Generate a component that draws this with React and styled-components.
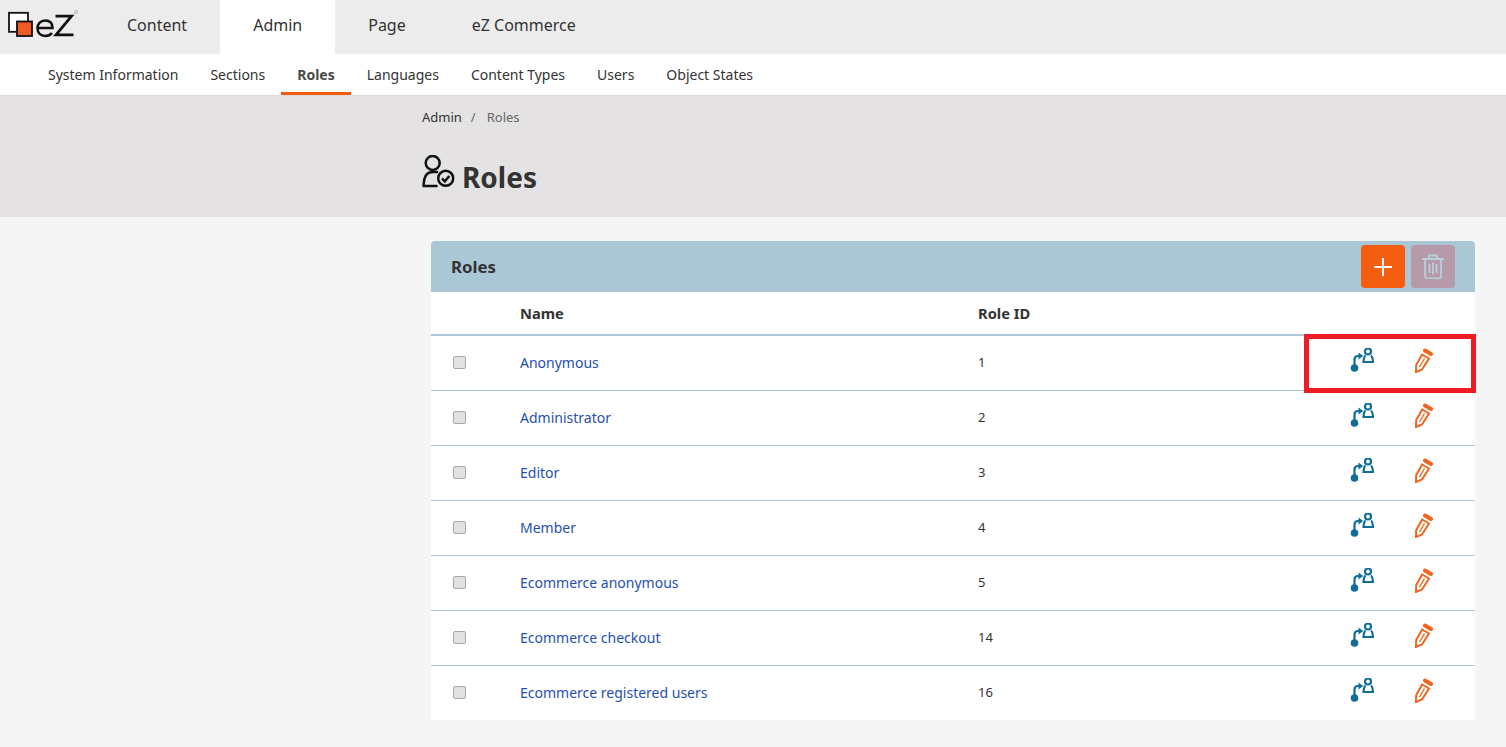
import React from 'react';
import styled, { createGlobalStyle } from 'styled-components';

const GlobalStyle = createGlobalStyle`
  html, body {
    margin: 0;
    padding: 0;
    background: #f5f5f5;
    font-family: "Noto Sans", "Open Sans", sans-serif;
    color: #333;
  }
`;

const TopBar = styled.div`
  display: flex;
  height: 54px;
  background: #ececec;
`;

const Logo = styled.div`
  width: 94px;
  padding: 8px 0 0 8px;
  box-sizing: border-box;
`;

const Tab = styled.a`
  display: flex;
  align-items: center;
  padding: 0 33px 4px;
  font-size: 16px;
  color: #333;
  background: ${({ $active }) => ($active ? '#fff' : 'transparent')};
`;

const SubBar = styled.div`
  display: flex;
  height: 41px;
  padding-left: 32px;
  background: #fff;
  border-bottom: 1px solid #dcdcdc;
`;

const SubItem = styled.a`
  display: flex;
  align-items: center;
  padding: 3px 16px 0;
  font-size: 14px;
  font-weight: ${({ $active }) => ($active ? 700 : 400)};
  color: ${({ $active }) => ($active ? '#4a4a4a' : '#333')};
  border-bottom: 3px solid ${({ $active }) => ($active ? '#f15a10' : 'transparent')};
  box-sizing: border-box;
  height: 41px;
`;

const TitleBand = styled.div`
  height: 121px;
  box-sizing: border-box;
  padding: 12px 0 0 422px;
  background: #e4e2e3;
`;

const Crumbs = styled.div`
  display: flex;
  align-items: center;
  height: 18px;
  font-size: 13px;
  color: #333;
`;

const CrumbSep = styled.span`
  padding: 0 11px 0 9px;
  color: #666;
`;

const CrumbCurrent = styled.span`
  color: #666;
`;

const Title = styled.h1`
  display: flex;
  align-items: center;
  gap: 7px;
  height: 40px;
  margin: 31px 0 0;
  font-size: 28px;
  line-height: 40px;
  font-weight: 700;
  color: #333;
  svg {
    margin-bottom: 12px;
  }
`;

const Main = styled.div`
  padding: 24px 31px 27px 431px;
`;

const Card = styled.div`
  position: relative;
  background: #fff;
`;

const CardHead = styled.div`
  display: flex;
  align-items: center;
  height: 51px;
  padding: 0 20px;
  background: #a9c7d4;
  border-radius: 4px 4px 0 0;
`;

const CardTitle = styled.h2`
  flex: 1;
  margin: 0;
  font-size: 16.8px;
  font-weight: 700;
  color: #333;
`;

const ActionButton = styled.button`
  display: flex;
  align-items: center;
  justify-content: center;
  width: 44px;
  height: 43px;
  margin-left: 6px;
  padding: 0;
  border: none;
  border-radius: 4px;
  background: ${({ $disabled }) => ($disabled ? '#b79aa9' : '#f55d10')};
`;

const Table = styled.table`
  width: 100%;
  border-collapse: collapse;
  table-layout: fixed;
`;

const Th = styled.th`
  height: 42px;
  padding: 0;
  text-align: left;
  font-size: 14.7px;
  font-weight: 700;
  color: #333;
  border-bottom: 2px solid #a9c7d4;
`;

const Row = styled.tr`
  height: 55px;
  border-bottom: 1px solid #a9c7d4;
  &:last-child {
    border-bottom: none;
  }
`;

const Td = styled.td`
  padding: 0 0 1px;
  font-size: 13px;
  color: #333;
`;

const CheckCell = styled(Td)`
  padding-left: 22px;
`;

const Check = styled.input`
  appearance: none;
  display: block;
  width: 13px;
  height: 13px;
  margin: 0;
  box-sizing: border-box;
  background: #e2e2e2;
  border: 1px solid #a8a8a8;
  border-radius: 2px;
`;

const RoleLink = styled.a`
  font-size: 14px;
  color: #1f4fb4;
`;

const Icons = styled.div`
  display: flex;
  gap: 40px;
  padding: 0 0 4px 44px;
  align-items: center;
`;

const Highlight = styled.div`
  position: absolute;
  left: 873px;
  top: 93px;
  width: 172px;
  height: 59px;
  box-sizing: border-box;
  border: 5px solid #ed1c24;
  pointer-events: none;
`;

const LogoMark = () => (
  <svg width="70" height="30" viewBox="0 0 70 30">
    <rect x="1" y="4.800" width="19" height="19" fill="#fff" stroke="#111" strokeWidth="1.800" />
    <rect x="9" y="13.500" width="15" height="14.500" fill="#f15a24" stroke="#111" strokeWidth="1.800" />
    <path d="M30 20h14.500c0-5-3-7.500-7.300-7.500-4.500 0-7.700 3.300-7.700 7.800 0 4.700 3.200 7.700 7.800 7.700 3 0 5.200-1 6.700-3" fill="none" stroke="#111" strokeWidth="2.600" />
    <path d="M47.500 8.200h16L48 26.800h17.500" fill="none" stroke="#111" strokeWidth="2.800" />
    <circle cx="68" cy="4" r="1.500" fill="none" stroke="#999" strokeWidth="0.700" />
  </svg>
);

const RolesIcon = () => (
  <svg width="33" height="33" viewBox="0 0 33 33" fill="none" stroke="#111" strokeWidth="2.500">
    <circle cx="10.700" cy="8" r="7" />
    <path d="M1.500 31c.3-6 1.500-10 3.500-12 1-1 3-2 6-2h4M1.500 31h13" strokeLinecap="round" />
    <circle cx="23.700" cy="23.300" r="7.500" />
    <path d="M20 23.500l2.800 2.800 4.500-5.300" />
  </svg>
);

const PlusIcon = () => (
  <svg width="20" height="20" viewBox="0 0 20 20" stroke="#fff" strokeWidth="2">
    <path d="M10 1v18M1 10h18" />
  </svg>
);

const TrashIcon = () => (
  <svg width="22" height="25" viewBox="0 0 22 25" fill="none" stroke="#b9cfd9" strokeWidth="1.800">
    <path d="M0 5h22M7 5V1.500h8V5M3 5v17c0 1.500 1 2.500 2.500 2.500h11c1.500 0 2.500-1 2.500-2.500V5" />
    <path d="M7.500 10v9M11 8.500v12M14.500 10v9" />
  </svg>
);

const AssignIcon = () => (
  <svg width="24" height="25" viewBox="0 0 24 25" fill="none" stroke="#0f6d96" strokeWidth="2.200">
    <circle cx="4.500" cy="20" r="3.800" fill="#0f6d96" stroke="none" />
    <path d="M4.500 18v-6.500c0-2.200 1-3.500 3.500-3.500h2" />
    <path d="M8.500 4.500l4.700 3.500-4.700 3.500z" fill="#0f6d96" stroke="none" />
    <circle cx="18" cy="3.500" r="3" />
    <path d="M15.500 7.500c-1.200 1-1.800 3-2 6.500h9.500c-.2-3.500-.8-5.500-2-6.500" />
  </svg>
);

const PencilIcon = () => (
  <svg width="20" height="25" viewBox="0 0 20 25" fill="none" stroke="#f0641e" strokeWidth="2">
    <path d="M11 2.500l6 3.500" strokeWidth="4" strokeLinecap="round" />
    <path d="M8.200 6.500L15 10.500 8 21.500 2 24l.2-7z" />
    <path d="M10.500 10.500L5.500 19" strokeWidth="1.400" />
  </svg>
);

const roles = [
  { name: 'Anonymous', id: 1 },
  { name: 'Administrator', id: 2 },
  { name: 'Editor', id: 3 },
  { name: 'Member', id: 4 },
  { name: 'Ecommerce anonymous', id: 5 },
  { name: 'Ecommerce checkout', id: 14 },
  { name: 'Ecommerce registered users', id: 16 },
];

const tabs = ['Content', 'Admin', 'Page', 'eZ Commerce'];
const subItems = ['System Information', 'Sections', 'Roles', 'Languages', 'Content Types', 'Users', 'Object States'];

const App = () => {
  return (
    <>
      <GlobalStyle />
      <TopBar>
        <Logo>
          <LogoMark />
        </Logo>
        {tabs.map((tab) => (
          <Tab key={tab} $active={tab === 'Admin'}>
            {tab}
          </Tab>
        ))}
      </TopBar>
      <SubBar>
        {subItems.map((item) => (
          <SubItem key={item} $active={item === 'Roles'}>
            {item}
          </SubItem>
        ))}
      </SubBar>
      <TitleBand>
        <Crumbs>
          Admin
          <CrumbSep>/</CrumbSep>
          <CrumbCurrent>Roles</CrumbCurrent>
        </Crumbs>
        <Title>
          <RolesIcon />
          Roles
        </Title>
      </TitleBand>
      <Main>
        <Card>
          <CardHead>
            <CardTitle>Roles</CardTitle>
            <ActionButton>
              <PlusIcon />
            </ActionButton>
            <ActionButton $disabled>
              <TrashIcon />
            </ActionButton>
          </CardHead>
          <Table>
            <colgroup>
              <col style={{ width: 89 }} />
              <col style={{ width: 458 }} />
              <col style={{ width: 328 }} />
              <col />
            </colgroup>
            <thead>
              <tr>
                <Th />
                <Th>Name</Th>
                <Th>Role ID</Th>
                <Th />
              </tr>
            </thead>
            <tbody>
              {roles.map((role) => (
                <Row key={role.id}>
                  <CheckCell>
                    <Check type="checkbox" disabled />
                  </CheckCell>
                  <Td>
                    <RoleLink>{role.name}</RoleLink>
                  </Td>
                  <Td>{role.id}</Td>
                  <Td>
                    <Icons>
                      <AssignIcon />
                      <PencilIcon />
                    </Icons>
                  </Td>
                </Row>
              ))}
            </tbody>
          </Table>
          <Highlight />
        </Card>
      </Main>
    </>
  );
};

export default App;
